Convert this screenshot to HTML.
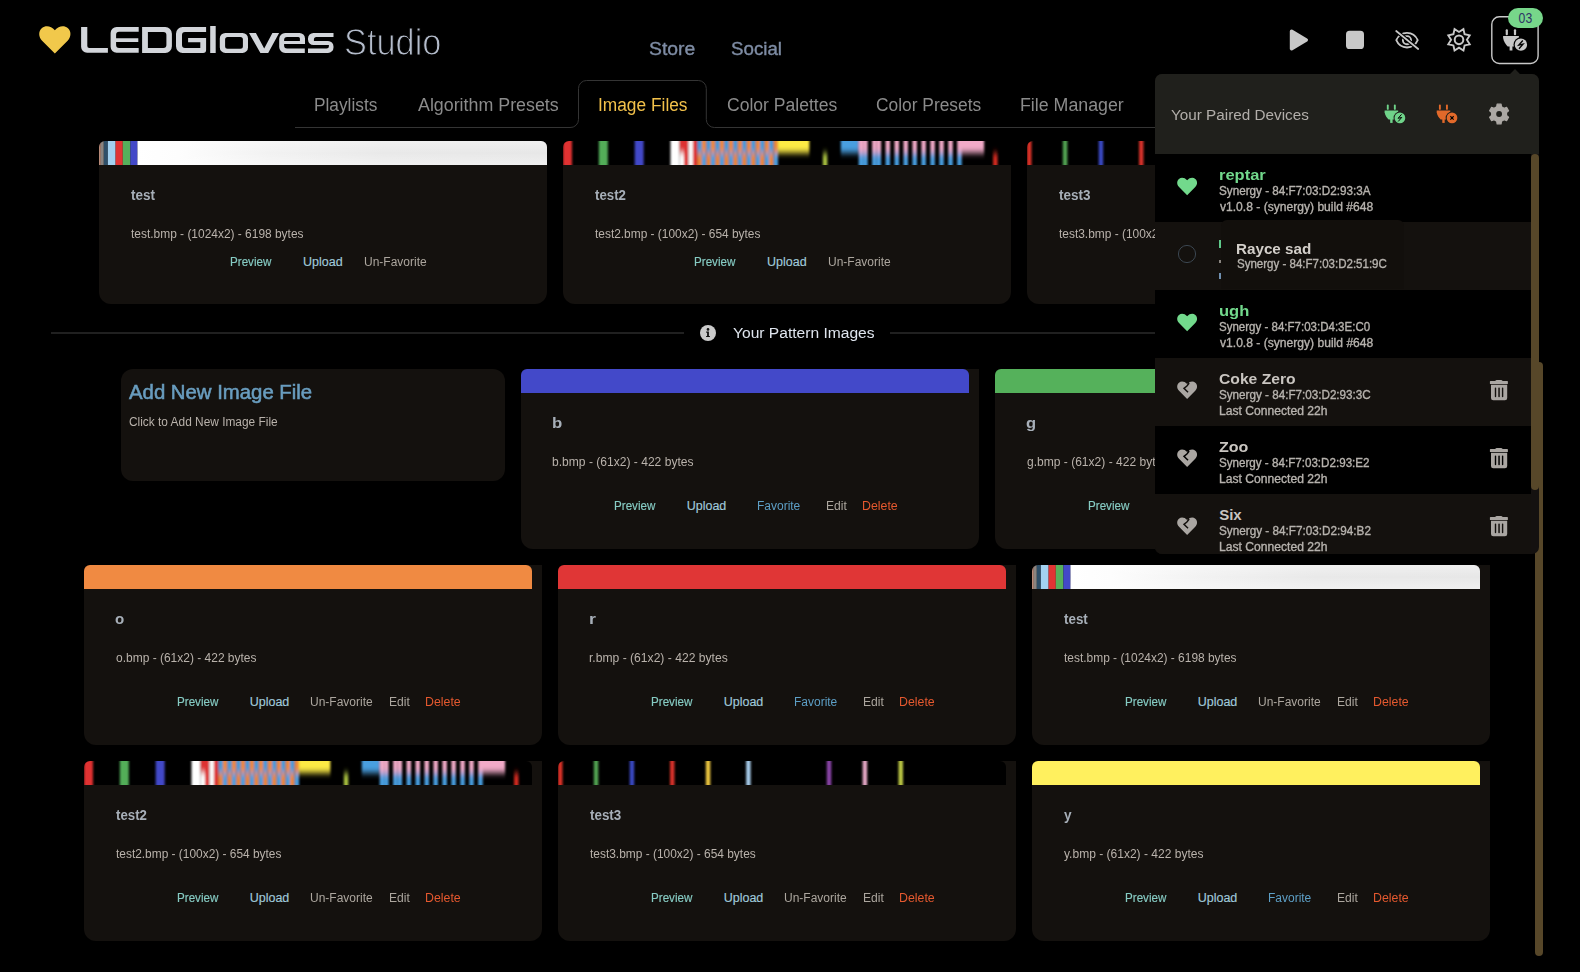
<!DOCTYPE html>
<html><head><meta charset="utf-8"><title>LEDGloves Studio</title>
<style>
html,body{margin:0;padding:0;background:#000;}
body{width:1580px;height:972px;overflow:hidden;position:relative;font-family:"Liberation Sans",sans-serif;}
.abs{position:absolute;display:block;}
.t{position:absolute;white-space:pre;line-height:1;transform-origin:0 0;}
.card{position:absolute;background:#14110e;}
.bar{position:absolute;height:24px;overflow:hidden;border-radius:6px 6px 0 0;}
.panel{position:absolute;left:1155px;top:74px;width:384px;height:480px;border-radius:7px;overflow:hidden;background:#141110;}
.row{position:absolute;left:0;width:376px;height:68px;}
</style></head>
<body>
<svg class="abs" style="left:0;top:0" width="460" height="70" viewBox="0 0 460 70"><path transform="translate(38.9,26.1) scale(0.997,1)" d="M16,27.5 L3.2,14.6 C-0.6,10.8 -0.6,4.9 3.1,1.9 C6.6,-0.9 12.1,-0.4 16,4.1 C19.9,-0.4 25.4,-0.9 28.9,1.9 C32.6,4.9 32.6,10.8 28.8,14.6 Z" fill="#f1c84b"/><path fill-rule="evenodd" fill="#d2d5da" d="M81.1,27.1 H87.3 V45.9 A2,2 0 0 0 89.3,47.9 H107.9 V52.8 H87.1 A6,6 0 0 1 81.1,46.8 Z M116.6,27.1 H138.7 V31.7 H119.1 A3,3 0 0 0 116.1,34.7 V38.2 H138.3 V41.9 H116.1 V44.9 A3,3 0 0 0 119.1,47.9 H138.7 V52.8 H116.6 A6,6 0 0 1 110.6,46.8 V33.1 A6,6 0 0 1 116.6,27.1 Z M142.1,27.1 H165.3 A6.6,6.6 0 0 1 171.9,33.7 V46.3 A6.6,6.6 0 0 1 165.3,52.9 H142.1 Z M147.9,31.9 V48.1 H163.4 A3,3 0 0 0 166.4,45.1 V34.9 A3,3 0 0 0 163.4,31.9 Z M182.6,27.1 H206.1 V31.9 H185 A3,3 0 0 0 182,34.9 V45.1 A3,3 0 0 0 185,48.1 H200.3 V42.3 H188.1 V38 H206.1 V49.9 A3,3 0 0 1 203.1,52.9 H182.6 A6.6,6.6 0 0 1 176,46.3 V33.7 A6.6,6.6 0 0 1 182.6,27.1 Z M210.2,26 H215.7 V52.9 H210.2 Z M225.3,32.9 H242.5 A5.5,5.5 0 0 1 248,38.4 V47.4 A5.5,5.5 0 0 1 242.5,52.9 H225.3 A5.5,5.5 0 0 1 219.8,47.4 V38.4 A5.5,5.5 0 0 1 225.3,32.9 Z M227.6,36.9 A2.5,2.5 0 0 0 225.1,39.4 V46.2 A2.5,2.5 0 0 0 227.6,48.7 H240.4 A2.5,2.5 0 0 0 242.9,46.2 V39.4 A2.5,2.5 0 0 0 240.4,36.9 Z M249,32.9 H255.9 L264.2,48.4 L272.4,32.9 H279.1 L268.2,52.9 H260.4 Z M285.2,32.9 H299.5 A5.5,5.5 0 0 1 305,38.4 V44 H284.1 V45.5 A3,3 0 0 0 287.1,48.5 H304.8 V52.9 H285.2 A6,6 0 0 1 279.2,46.9 V38.9 A6,6 0 0 1 285.2,32.9 Z M287.1,37.1 A3,3 0 0 0 284.1,40.1 V41 H299.9 V38.6 A1.5,1.5 0 0 0 298.4,37.1 Z M313.5,32.9 H333.5 V37.1 H316.4 A2.5,2.5 0 0 0 313.9,39.6 V41 H328 A5.5,5.5 0 0 1 333.5,46.5 V47.4 A5.5,5.5 0 0 1 328,52.9 H308 V48.5 H326.4 A2.5,2.5 0 0 0 328.9,46 V45 H313.5 A5.5,5.5 0 0 1 308,39.5 V38.4 A5.5,5.5 0 0 1 313.5,32.9 Z"/></svg>
<svg class="abs" style="left:1200px;top:0" width="380" height="80" viewBox="1200 0 380 80"><polygon points="1291.6,31.3 1306.2,40 1291.6,48.7" fill="#c8c8c8" stroke="#c8c8c8" stroke-width="3.6" stroke-linejoin="round"/><rect x="1346" y="30.8" width="18" height="18.2" rx="3.6" fill="#c8c8c8"/><path d="M1396.3,40.2 C1400.5,30.5 1413.5,30.5 1417.7,40.2 C1413.5,49.9 1400.5,49.9 1396.3,40.2 Z" fill="none" stroke="#c8c8c8" stroke-width="1.8"/><circle cx="1407" cy="40.2" r="4.1" fill="none" stroke="#c8c8c8" stroke-width="1.9"/><line x1="1396.2" y1="31" x2="1418.2" y2="49" stroke="#000" stroke-width="4"/><line x1="1396.2" y1="31" x2="1418.2" y2="49" stroke="#c8c8c8" stroke-width="1.7" stroke-linecap="round"/><polygon points="1463.44,29.13 1464.59,34.26 1469.72,35.41 1466.90,39.85 1469.72,44.29 1464.59,45.44 1463.44,50.57 1459.00,47.75 1454.56,50.57 1453.41,45.44 1448.28,44.29 1451.10,39.85 1448.28,35.41 1453.41,34.26 1454.56,29.13 1459.00,31.95" fill="none" stroke="#c8c8c8" stroke-width="1.9" stroke-linejoin="miter"/><circle cx="1459" cy="39.85" r="4.3" fill="none" stroke="#c8c8c8" stroke-width="2"/><rect x="1491.8" y="16.7" width="46.3" height="46.8" rx="7.5" fill="none" stroke="#c9c9c9" stroke-width="1.4"/><g transform="translate(1503.1,29.2) scale(1.0)" fill="#c8c8c8"><rect x="2.6" y="0" width="2.2" height="6" rx="1"/><rect x="10.8" y="0" width="2.2" height="6" rx="1"/><path d="M0,6.9 H15.8 V8.9 C15.2,12.4 13.3,15.6 11.2,17.2 H4.6 C2.5,15.6 0.6,12.4 0,8.9 Z"/><rect x="6.5" y="16" width="2.8" height="5.3"/><circle cx="17.8" cy="15.45" r="7.4" fill="#000"/><circle cx="17.8" cy="15.45" r="6.2" fill="#c8c8c8"/><path d="M19.7,11.35 L15.700000000000001,15.95 L19.900000000000002,14.95 L15.9,19.549999999999997" fill="none" stroke="#000" stroke-width="1.35" stroke-linejoin="miter" stroke-miterlimit="6"/></g><rect x="1508" y="8" width="35" height="20" rx="10" fill="#77d68a"/><text x="1525.4" y="23" text-anchor="middle" font-family="Liberation Sans" font-size="14.2" fill="#2e3466" transform="translate(1525.4,0) scale(0.86,1) translate(-1525.4,0)">03</text></svg>
<svg class="abs" style="left:0;top:70px" width="1580" height="70" viewBox="0 70 1580 70">
<path d="M295,127.5 H570 A8,8 0 0 0 578.5,119.5 V88.5 A8,8 0 0 1 586.5,80.5 H698.3 A8,8 0 0 1 706.3,88.5 V119.5 A8,8 0 0 0 714.3,127.5 H1160" fill="none" stroke="#343434" stroke-width="1"/>
</svg>
<!-- separator -->
<div class="abs" style="left:51px;top:332px;width:633px;height:2px;background:#202020"></div>
<div class="abs" style="left:890px;top:332px;width:270px;height:2px;background:#202020"></div>
<svg class="abs" style="left:699px;top:324px" width="18" height="18" viewBox="0 0 18 18">
<circle cx="9" cy="9" r="8" fill="#cacaca"/>
<circle cx="9" cy="5.4" r="1.3" fill="#111"/>
<path d="M7.2,7.6 H9.9 V11.9 H10.9 V13.1 H7.1 V11.9 H8.1 V8.8 H7.2 Z" fill="#111"/>
</svg>
<!-- add new card -->
<div class="card" style="left:121px;top:369px;width:384px;height:112px;border-radius:12px"></div>
<div class="card" style="left:99px;top:141px;width:448px;height:163px;border-radius:12px"></div>
<div class="bar" style="left:99px;top:141px;width:448px"><svg width="448" height="24" viewBox="0 0 448 24" style="display:block"><defs><linearGradient id="tg1" x1="0" x2="1" y1="0" y2="0"><stop offset="0" stop-color="#ffffff"/><stop offset="0.1" stop-color="#fdfdfd"/><stop offset="0.32" stop-color="#f2f2f2"/><stop offset="0.6" stop-color="#e9e9e9"/><stop offset="1" stop-color="#e7e7e7"/></linearGradient><linearGradient id="tg1v" x1="0" x2="0" y1="0" y2="1"><stop offset="0" stop-color="#fff" stop-opacity="0.35"/><stop offset="0.5" stop-color="#fff" stop-opacity="0"/><stop offset="1" stop-color="#fff" stop-opacity="0.35"/></linearGradient></defs><rect x="38.3" y="0" width="410" height="24" fill="url(#tg1)"/><rect x="38.3" y="0" width="410" height="24" fill="url(#tg1v)"/><rect x="0" y="0" width="1.8" height="24" fill="#b88a78"/><rect x="1.8" y="0" width="3.0" height="24" fill="#8a8480"/><rect x="4.8" y="0" width="4.1000000000000005" height="24" fill="#2f4f68"/><rect x="8.9" y="0" width="7.700000000000001" height="24" fill="#a3d1f0"/><rect x="16.6" y="0" width="7.199999999999999" height="24" fill="#e13434"/><rect x="23.8" y="0" width="7.599999999999998" height="24" fill="#56b05b"/><rect x="31.4" y="0" width="6.899999999999999" height="24" fill="#4349c8"/></svg></div>
<div class="card" style="left:563px;top:141px;width:448px;height:163px;border-radius:12px"></div>
<div class="bar" style="left:563px;top:141px;width:448px"><svg width="448" height="24" viewBox="0 0 448 24" style="display:block"><defs><filter id="bf2" x="-5%" y="-100%" width="110%" height="300%"><feGaussianBlur stdDeviation="1.0 3.0"/></filter></defs><rect width="448" height="24" fill="#000"/><g filter="url(#bf2)"><rect x="0.00" y="-12" width="8.96" height="24" fill="#e03232"/><rect x="0.00" y="12" width="8.96" height="24" fill="#e03232"/><rect x="35.84" y="-12" width="8.96" height="24" fill="#52ae58"/><rect x="35.84" y="12" width="8.96" height="24" fill="#52ae58"/><rect x="71.68" y="-12" width="8.96" height="24" fill="#4249c9"/><rect x="71.68" y="12" width="8.96" height="24" fill="#4249c9"/><rect x="107.52" y="-12" width="8.96" height="24" fill="#ffffff"/><rect x="107.52" y="12" width="8.96" height="24" fill="#ffffff"/><rect x="116.48" y="-12" width="4.48" height="24" fill="#e03232"/><rect x="116.48" y="12" width="4.48" height="24" fill="#ffffff"/><rect x="120.96" y="-12" width="4.48" height="24" fill="#e03232"/><rect x="120.96" y="12" width="4.48" height="24" fill="#e03232"/><rect x="125.44" y="-12" width="4.48" height="24" fill="#ffffff"/><rect x="125.44" y="12" width="4.48" height="24" fill="#ffffff"/><rect x="129.92" y="-12" width="4.48" height="24" fill="#e03232"/><rect x="129.92" y="12" width="4.48" height="24" fill="#e03232"/><rect x="134.40" y="-12" width="4.48" height="24" fill="#4a9fe0"/><rect x="134.40" y="12" width="4.48" height="24" fill="#ef8a3a"/><rect x="138.88" y="-12" width="4.48" height="24" fill="#ef8a3a"/><rect x="138.88" y="12" width="4.48" height="24" fill="#4a9fe0"/><rect x="143.36" y="-12" width="4.48" height="24" fill="#4a9fe0"/><rect x="143.36" y="12" width="4.48" height="24" fill="#ef8a3a"/><rect x="147.84" y="-12" width="4.48" height="24" fill="#ef8a3a"/><rect x="147.84" y="12" width="4.48" height="24" fill="#4a9fe0"/><rect x="152.32" y="-12" width="4.48" height="24" fill="#4a9fe0"/><rect x="152.32" y="12" width="4.48" height="24" fill="#ef8a3a"/><rect x="156.80" y="-12" width="4.48" height="24" fill="#ef8a3a"/><rect x="156.80" y="12" width="4.48" height="24" fill="#4a9fe0"/><rect x="161.28" y="-12" width="4.48" height="24" fill="#4a9fe0"/><rect x="161.28" y="12" width="4.48" height="24" fill="#ef8a3a"/><rect x="165.76" y="-12" width="4.48" height="24" fill="#ef8a3a"/><rect x="165.76" y="12" width="4.48" height="24" fill="#4a9fe0"/><rect x="170.24" y="-12" width="4.48" height="24" fill="#4a9fe0"/><rect x="170.24" y="12" width="4.48" height="24" fill="#ef8a3a"/><rect x="174.72" y="-12" width="4.48" height="24" fill="#ef8a3a"/><rect x="174.72" y="12" width="4.48" height="24" fill="#4a9fe0"/><rect x="179.20" y="-12" width="4.48" height="24" fill="#4a9fe0"/><rect x="179.20" y="12" width="4.48" height="24" fill="#ef8a3a"/><rect x="183.68" y="-12" width="4.48" height="24" fill="#ef8a3a"/><rect x="183.68" y="12" width="4.48" height="24" fill="#4a9fe0"/><rect x="188.16" y="-12" width="4.48" height="24" fill="#4a9fe0"/><rect x="188.16" y="12" width="4.48" height="24" fill="#ef8a3a"/><rect x="192.64" y="-12" width="4.48" height="24" fill="#ef8a3a"/><rect x="192.64" y="12" width="4.48" height="24" fill="#4a9fe0"/><rect x="197.12" y="-12" width="4.48" height="24" fill="#4a9fe0"/><rect x="197.12" y="12" width="4.48" height="24" fill="#ef8a3a"/><rect x="201.60" y="-12" width="4.48" height="24" fill="#ef8a3a"/><rect x="201.60" y="12" width="4.48" height="24" fill="#4a9fe0"/><rect x="206.08" y="-12" width="4.48" height="24" fill="#4a9fe0"/><rect x="206.08" y="12" width="4.48" height="24" fill="#ef8a3a"/><rect x="210.56" y="-12" width="4.48" height="24" fill="#ef8a3a"/><rect x="210.56" y="12" width="4.48" height="24" fill="#4a9fe0"/><rect x="215.04" y="-12" width="31.36" height="24" fill="#fdeb45"/><rect x="259.84" y="12" width="4.48" height="24" fill="#a8c040"/><rect x="277.76" y="-12" width="17.92" height="24" fill="#4a9fe0"/><rect x="295.68" y="-12" width="4.48" height="24" fill="#f2aac8"/><rect x="295.68" y="12" width="4.48" height="24" fill="#4a9fe0"/><rect x="300.16" y="-12" width="4.48" height="24" fill="#f2aac8"/><rect x="300.16" y="12" width="4.48" height="24" fill="#4a9fe0"/><rect x="309.12" y="-12" width="4.48" height="24" fill="#f2aac8"/><rect x="309.12" y="12" width="4.48" height="24" fill="#4a9fe0"/><rect x="313.60" y="-12" width="4.48" height="24" fill="#f2aac8"/><rect x="313.60" y="12" width="4.48" height="24" fill="#4a9fe0"/><rect x="322.56" y="-12" width="4.48" height="24" fill="#f2aac8"/><rect x="322.56" y="12" width="4.48" height="24" fill="#4a9fe0"/><rect x="331.52" y="-12" width="4.48" height="24" fill="#f2aac8"/><rect x="331.52" y="12" width="4.48" height="24" fill="#4a9fe0"/><rect x="340.48" y="-12" width="4.48" height="24" fill="#f2aac8"/><rect x="340.48" y="12" width="4.48" height="24" fill="#4a9fe0"/><rect x="349.44" y="-12" width="4.48" height="24" fill="#f2aac8"/><rect x="349.44" y="12" width="4.48" height="24" fill="#4a9fe0"/><rect x="358.40" y="-12" width="4.48" height="24" fill="#f2aac8"/><rect x="358.40" y="12" width="4.48" height="24" fill="#4a9fe0"/><rect x="367.36" y="-12" width="4.48" height="24" fill="#f2aac8"/><rect x="367.36" y="12" width="4.48" height="24" fill="#4a9fe0"/><rect x="376.32" y="-12" width="4.48" height="24" fill="#f2aac8"/><rect x="376.32" y="12" width="4.48" height="24" fill="#4a9fe0"/><rect x="385.28" y="-12" width="4.48" height="24" fill="#f2aac8"/><rect x="385.28" y="12" width="4.48" height="24" fill="#4a9fe0"/><rect x="394.24" y="-12" width="26.88" height="24" fill="#f2aac8"/><rect x="394.24" y="12" width="4.48" height="24" fill="#4a9fe0"/><rect x="430.08" y="12" width="4.48" height="24" fill="#d42a20"/></g></svg></div>
<div class="card" style="left:1027px;top:141px;width:448px;height:163px;border-radius:12px"></div>
<div class="bar" style="left:1027px;top:141px;width:448px"><svg width="448" height="24" viewBox="0 0 448 24" style="display:block"><defs><filter id="bf3" x="-5%" y="-100%" width="110%" height="300%"><feGaussianBlur stdDeviation="0.9 3.0"/></filter></defs><rect width="448" height="24" fill="#000"/><g filter="url(#bf3)"><rect x="0.00" y="-12" width="4.48" height="24" fill="#dc3228"/><rect x="0.00" y="12" width="4.48" height="24" fill="#dc3228"/><rect x="35.84" y="-12" width="4.48" height="24" fill="#52a452"/><rect x="35.84" y="12" width="4.48" height="24" fill="#52a452"/><rect x="71.68" y="-12" width="4.48" height="24" fill="#3a48c4"/><rect x="71.68" y="12" width="4.48" height="24" fill="#3a48c4"/><rect x="112.00" y="-12" width="4.48" height="24" fill="#d8302a"/><rect x="112.00" y="12" width="4.48" height="24" fill="#d8302a"/><rect x="147.84" y="-12" width="4.48" height="24" fill="#ecc640"/><rect x="147.84" y="12" width="4.48" height="24" fill="#ecc640"/><rect x="188.16" y="-12" width="4.48" height="24" fill="#a8cdec"/><rect x="188.16" y="12" width="4.48" height="24" fill="#a8cdec"/><rect x="268.80" y="-12" width="4.48" height="24" fill="#8a44a8"/><rect x="268.80" y="12" width="4.48" height="24" fill="#8a44a8"/><rect x="304.64" y="-12" width="4.48" height="24" fill="#e6a8c6"/><rect x="304.64" y="12" width="4.48" height="24" fill="#e6a8c6"/><rect x="340.48" y="-12" width="4.48" height="24" fill="#bcc844"/><rect x="340.48" y="12" width="4.48" height="24" fill="#bcc844"/></g></svg></div>
<div class="card" style="left:521px;top:369px;width:458px;height:180px;border-radius:12px 0 12px 12px"></div>
<div class="bar" style="left:521px;top:369px;width:448px"><div style="width:100%;height:100%;background:#4349c9"></div></div>
<div class="card" style="left:995px;top:369px;width:458px;height:180px;border-radius:12px 0 12px 12px"></div>
<div class="bar" style="left:995px;top:369px;width:448px"><div style="width:100%;height:100%;background:#55b15b"></div></div>
<div class="card" style="left:84px;top:565px;width:458px;height:180px;border-radius:12px 0 12px 12px"></div>
<div class="bar" style="left:84px;top:565px;width:448px"><div style="width:100%;height:100%;background:#f08a42"></div></div>
<div class="card" style="left:558px;top:565px;width:458px;height:180px;border-radius:12px 0 12px 12px"></div>
<div class="bar" style="left:558px;top:565px;width:448px"><div style="width:100%;height:100%;background:#e03636"></div></div>
<div class="card" style="left:1032px;top:565px;width:458px;height:180px;border-radius:12px 0 12px 12px"></div>
<div class="bar" style="left:1032px;top:565px;width:448px"><svg width="448" height="24" viewBox="0 0 448 24" style="display:block"><defs><linearGradient id="tg4" x1="0" x2="1" y1="0" y2="0"><stop offset="0" stop-color="#ffffff"/><stop offset="0.1" stop-color="#fdfdfd"/><stop offset="0.32" stop-color="#f2f2f2"/><stop offset="0.6" stop-color="#e9e9e9"/><stop offset="1" stop-color="#e7e7e7"/></linearGradient><linearGradient id="tg4v" x1="0" x2="0" y1="0" y2="1"><stop offset="0" stop-color="#fff" stop-opacity="0.35"/><stop offset="0.5" stop-color="#fff" stop-opacity="0"/><stop offset="1" stop-color="#fff" stop-opacity="0.35"/></linearGradient></defs><rect x="38.3" y="0" width="410" height="24" fill="url(#tg4)"/><rect x="38.3" y="0" width="410" height="24" fill="url(#tg4v)"/><rect x="0" y="0" width="1.8" height="24" fill="#b88a78"/><rect x="1.8" y="0" width="3.0" height="24" fill="#8a8480"/><rect x="4.8" y="0" width="4.1000000000000005" height="24" fill="#2f4f68"/><rect x="8.9" y="0" width="7.700000000000001" height="24" fill="#a3d1f0"/><rect x="16.6" y="0" width="7.199999999999999" height="24" fill="#e13434"/><rect x="23.8" y="0" width="7.599999999999998" height="24" fill="#56b05b"/><rect x="31.4" y="0" width="6.899999999999999" height="24" fill="#4349c8"/></svg></div>
<div class="card" style="left:84px;top:761px;width:458px;height:180px;border-radius:12px 0 12px 12px"></div>
<div class="bar" style="left:84px;top:761px;width:448px"><svg width="448" height="24" viewBox="0 0 448 24" style="display:block"><defs><filter id="bf5" x="-5%" y="-100%" width="110%" height="300%"><feGaussianBlur stdDeviation="1.0 3.0"/></filter></defs><rect width="448" height="24" fill="#000"/><g filter="url(#bf5)"><rect x="0.00" y="-12" width="8.96" height="24" fill="#e03232"/><rect x="0.00" y="12" width="8.96" height="24" fill="#e03232"/><rect x="35.84" y="-12" width="8.96" height="24" fill="#52ae58"/><rect x="35.84" y="12" width="8.96" height="24" fill="#52ae58"/><rect x="71.68" y="-12" width="8.96" height="24" fill="#4249c9"/><rect x="71.68" y="12" width="8.96" height="24" fill="#4249c9"/><rect x="107.52" y="-12" width="8.96" height="24" fill="#ffffff"/><rect x="107.52" y="12" width="8.96" height="24" fill="#ffffff"/><rect x="116.48" y="-12" width="4.48" height="24" fill="#e03232"/><rect x="116.48" y="12" width="4.48" height="24" fill="#ffffff"/><rect x="120.96" y="-12" width="4.48" height="24" fill="#e03232"/><rect x="120.96" y="12" width="4.48" height="24" fill="#e03232"/><rect x="125.44" y="-12" width="4.48" height="24" fill="#ffffff"/><rect x="125.44" y="12" width="4.48" height="24" fill="#ffffff"/><rect x="129.92" y="-12" width="4.48" height="24" fill="#e03232"/><rect x="129.92" y="12" width="4.48" height="24" fill="#e03232"/><rect x="134.40" y="-12" width="4.48" height="24" fill="#4a9fe0"/><rect x="134.40" y="12" width="4.48" height="24" fill="#ef8a3a"/><rect x="138.88" y="-12" width="4.48" height="24" fill="#ef8a3a"/><rect x="138.88" y="12" width="4.48" height="24" fill="#4a9fe0"/><rect x="143.36" y="-12" width="4.48" height="24" fill="#4a9fe0"/><rect x="143.36" y="12" width="4.48" height="24" fill="#ef8a3a"/><rect x="147.84" y="-12" width="4.48" height="24" fill="#ef8a3a"/><rect x="147.84" y="12" width="4.48" height="24" fill="#4a9fe0"/><rect x="152.32" y="-12" width="4.48" height="24" fill="#4a9fe0"/><rect x="152.32" y="12" width="4.48" height="24" fill="#ef8a3a"/><rect x="156.80" y="-12" width="4.48" height="24" fill="#ef8a3a"/><rect x="156.80" y="12" width="4.48" height="24" fill="#4a9fe0"/><rect x="161.28" y="-12" width="4.48" height="24" fill="#4a9fe0"/><rect x="161.28" y="12" width="4.48" height="24" fill="#ef8a3a"/><rect x="165.76" y="-12" width="4.48" height="24" fill="#ef8a3a"/><rect x="165.76" y="12" width="4.48" height="24" fill="#4a9fe0"/><rect x="170.24" y="-12" width="4.48" height="24" fill="#4a9fe0"/><rect x="170.24" y="12" width="4.48" height="24" fill="#ef8a3a"/><rect x="174.72" y="-12" width="4.48" height="24" fill="#ef8a3a"/><rect x="174.72" y="12" width="4.48" height="24" fill="#4a9fe0"/><rect x="179.20" y="-12" width="4.48" height="24" fill="#4a9fe0"/><rect x="179.20" y="12" width="4.48" height="24" fill="#ef8a3a"/><rect x="183.68" y="-12" width="4.48" height="24" fill="#ef8a3a"/><rect x="183.68" y="12" width="4.48" height="24" fill="#4a9fe0"/><rect x="188.16" y="-12" width="4.48" height="24" fill="#4a9fe0"/><rect x="188.16" y="12" width="4.48" height="24" fill="#ef8a3a"/><rect x="192.64" y="-12" width="4.48" height="24" fill="#ef8a3a"/><rect x="192.64" y="12" width="4.48" height="24" fill="#4a9fe0"/><rect x="197.12" y="-12" width="4.48" height="24" fill="#4a9fe0"/><rect x="197.12" y="12" width="4.48" height="24" fill="#ef8a3a"/><rect x="201.60" y="-12" width="4.48" height="24" fill="#ef8a3a"/><rect x="201.60" y="12" width="4.48" height="24" fill="#4a9fe0"/><rect x="206.08" y="-12" width="4.48" height="24" fill="#4a9fe0"/><rect x="206.08" y="12" width="4.48" height="24" fill="#ef8a3a"/><rect x="210.56" y="-12" width="4.48" height="24" fill="#ef8a3a"/><rect x="210.56" y="12" width="4.48" height="24" fill="#4a9fe0"/><rect x="215.04" y="-12" width="31.36" height="24" fill="#fdeb45"/><rect x="259.84" y="12" width="4.48" height="24" fill="#a8c040"/><rect x="277.76" y="-12" width="17.92" height="24" fill="#4a9fe0"/><rect x="295.68" y="-12" width="4.48" height="24" fill="#f2aac8"/><rect x="295.68" y="12" width="4.48" height="24" fill="#4a9fe0"/><rect x="300.16" y="-12" width="4.48" height="24" fill="#f2aac8"/><rect x="300.16" y="12" width="4.48" height="24" fill="#4a9fe0"/><rect x="309.12" y="-12" width="4.48" height="24" fill="#f2aac8"/><rect x="309.12" y="12" width="4.48" height="24" fill="#4a9fe0"/><rect x="313.60" y="-12" width="4.48" height="24" fill="#f2aac8"/><rect x="313.60" y="12" width="4.48" height="24" fill="#4a9fe0"/><rect x="322.56" y="-12" width="4.48" height="24" fill="#f2aac8"/><rect x="322.56" y="12" width="4.48" height="24" fill="#4a9fe0"/><rect x="331.52" y="-12" width="4.48" height="24" fill="#f2aac8"/><rect x="331.52" y="12" width="4.48" height="24" fill="#4a9fe0"/><rect x="340.48" y="-12" width="4.48" height="24" fill="#f2aac8"/><rect x="340.48" y="12" width="4.48" height="24" fill="#4a9fe0"/><rect x="349.44" y="-12" width="4.48" height="24" fill="#f2aac8"/><rect x="349.44" y="12" width="4.48" height="24" fill="#4a9fe0"/><rect x="358.40" y="-12" width="4.48" height="24" fill="#f2aac8"/><rect x="358.40" y="12" width="4.48" height="24" fill="#4a9fe0"/><rect x="367.36" y="-12" width="4.48" height="24" fill="#f2aac8"/><rect x="367.36" y="12" width="4.48" height="24" fill="#4a9fe0"/><rect x="376.32" y="-12" width="4.48" height="24" fill="#f2aac8"/><rect x="376.32" y="12" width="4.48" height="24" fill="#4a9fe0"/><rect x="385.28" y="-12" width="4.48" height="24" fill="#f2aac8"/><rect x="385.28" y="12" width="4.48" height="24" fill="#4a9fe0"/><rect x="394.24" y="-12" width="26.88" height="24" fill="#f2aac8"/><rect x="394.24" y="12" width="4.48" height="24" fill="#4a9fe0"/><rect x="430.08" y="12" width="4.48" height="24" fill="#d42a20"/></g></svg></div>
<div class="card" style="left:558px;top:761px;width:458px;height:180px;border-radius:12px 0 12px 12px"></div>
<div class="bar" style="left:558px;top:761px;width:448px"><svg width="448" height="24" viewBox="0 0 448 24" style="display:block"><defs><filter id="bf6" x="-5%" y="-100%" width="110%" height="300%"><feGaussianBlur stdDeviation="0.9 3.0"/></filter></defs><rect width="448" height="24" fill="#000"/><g filter="url(#bf6)"><rect x="0.00" y="-12" width="4.48" height="24" fill="#dc3228"/><rect x="0.00" y="12" width="4.48" height="24" fill="#dc3228"/><rect x="35.84" y="-12" width="4.48" height="24" fill="#52a452"/><rect x="35.84" y="12" width="4.48" height="24" fill="#52a452"/><rect x="71.68" y="-12" width="4.48" height="24" fill="#3a48c4"/><rect x="71.68" y="12" width="4.48" height="24" fill="#3a48c4"/><rect x="112.00" y="-12" width="4.48" height="24" fill="#d8302a"/><rect x="112.00" y="12" width="4.48" height="24" fill="#d8302a"/><rect x="147.84" y="-12" width="4.48" height="24" fill="#ecc640"/><rect x="147.84" y="12" width="4.48" height="24" fill="#ecc640"/><rect x="188.16" y="-12" width="4.48" height="24" fill="#a8cdec"/><rect x="188.16" y="12" width="4.48" height="24" fill="#a8cdec"/><rect x="268.80" y="-12" width="4.48" height="24" fill="#8a44a8"/><rect x="268.80" y="12" width="4.48" height="24" fill="#8a44a8"/><rect x="304.64" y="-12" width="4.48" height="24" fill="#e6a8c6"/><rect x="304.64" y="12" width="4.48" height="24" fill="#e6a8c6"/><rect x="340.48" y="-12" width="4.48" height="24" fill="#bcc844"/><rect x="340.48" y="12" width="4.48" height="24" fill="#bcc844"/></g></svg></div>
<div class="card" style="left:1032px;top:761px;width:458px;height:180px;border-radius:12px 0 12px 12px"></div>
<div class="bar" style="left:1032px;top:761px;width:448px"><div style="width:100%;height:100%;background:#fff05e"></div></div>
<div class="t" style="left:344.13px;top:24px;font-size:37px;font-weight:normal;color:#b4bccb;transform:scaleX(0.9281);-webkit-text-stroke:1.1px #000;">Studio</div>
<div class="t" style="left:649.33px;top:41px;font-size:17.5px;font-weight:normal;color:#7e8ca4;transform:scaleX(1.1041);-webkit-text-stroke:0.35px #7e8ca4;">Store</div>
<div class="t" style="left:731.45px;top:41px;font-size:17.5px;font-weight:normal;color:#7e8ca4;transform:scaleX(1.0703);-webkit-text-stroke:0.35px #7e8ca4;">Social</div>
<div class="t" style="left:314.26px;top:96px;font-size:18px;font-weight:normal;color:#8b8b8b;transform:scaleX(0.9592);">Playlists</div>
<div class="t" style="left:417.60px;top:96px;font-size:18px;font-weight:normal;color:#8b8b8b;transform:scaleX(0.9905);">Algorithm Presets</div>
<div class="t" style="left:597.86px;top:96px;font-size:18px;font-weight:normal;color:#f2c14a;transform:scaleX(0.9622);">Image Files</div>
<div class="t" style="left:727.12px;top:96px;font-size:18px;font-weight:normal;color:#8b8b8b;transform:scaleX(0.9753);">Color Palettes</div>
<div class="t" style="left:876.23px;top:96px;font-size:18px;font-weight:normal;color:#8b8b8b;transform:scaleX(0.9643);">Color Presets</div>
<div class="t" style="left:1020.42px;top:96px;font-size:18px;font-weight:normal;color:#8b8b8b;transform:scaleX(0.9879);">File Manager</div>
<div class="t" style="left:732.60px;top:325px;font-size:15.5px;font-weight:normal;color:#dfe5ee;transform:scaleX(1.0058);">Your Pattern Images</div>
<div class="t" style="left:130.90px;top:188px;font-size:14px;font-weight:bold;color:#a7afb8;transform:scaleX(0.9621);">test</div>
<div class="t" style="left:130.90px;top:228px;font-size:12.5px;font-weight:normal;color:#b9b2ab;transform:scaleX(0.9550);">test.bmp - (1024x2) - 6198 bytes</div>
<div class="t" style="left:229.57px;top:256px;font-size:12.5px;font-weight:normal;color:#86cbc3;transform:scaleX(0.9304);-webkit-text-stroke:0.15px #86cbc3;">Preview</div>
<div class="t" style="left:303.10px;top:256px;font-size:12.5px;font-weight:normal;color:#a0cadb;-webkit-text-stroke:0.15px #a0cadb;">Upload</div>
<div class="t" style="left:363.64px;top:256px;font-size:12.5px;font-weight:normal;color:#aca69e;transform:scaleX(0.9602);">Un-Favorite</div>
<div class="t" style="left:594.91px;top:188px;font-size:14px;font-weight:bold;color:#a7afb8;transform:scaleX(0.9471);">test2</div>
<div class="t" style="left:594.90px;top:228px;font-size:12.5px;font-weight:normal;color:#b9b2ab;transform:scaleX(0.9524);">test2.bmp - (100x2) - 654 bytes</div>
<div class="t" style="left:693.57px;top:256px;font-size:12.5px;font-weight:normal;color:#86cbc3;transform:scaleX(0.9304);-webkit-text-stroke:0.15px #86cbc3;">Preview</div>
<div class="t" style="left:767.10px;top:256px;font-size:12.5px;font-weight:normal;color:#a0cadb;-webkit-text-stroke:0.15px #a0cadb;">Upload</div>
<div class="t" style="left:827.64px;top:256px;font-size:12.5px;font-weight:normal;color:#aca69e;transform:scaleX(0.9602);">Un-Favorite</div>
<div class="t" style="left:1058.90px;top:188px;font-size:14px;font-weight:bold;color:#a7afb8;transform:scaleX(0.9627);">test3</div>
<div class="t" style="left:1058.90px;top:228px;font-size:12.5px;font-weight:normal;color:#b9b2ab;transform:scaleX(0.9541);">test3.bmp - (100x2) - 654 bytes</div>
<div class="t" style="left:1157.57px;top:256px;font-size:12.5px;font-weight:normal;color:#86cbc3;transform:scaleX(0.9304);-webkit-text-stroke:0.15px #86cbc3;">Preview</div>
<div class="t" style="left:1231.10px;top:256px;font-size:12.5px;font-weight:normal;color:#a0cadb;-webkit-text-stroke:0.15px #a0cadb;">Upload</div>
<div class="t" style="left:1291.64px;top:256px;font-size:12.5px;font-weight:normal;color:#aca69e;transform:scaleX(0.9602);">Un-Favorite</div>
<div class="t" style="left:551.92px;top:416px;font-size:14px;font-weight:bold;color:#a7afb8;transform:scaleX(1.1972);">b</div>
<div class="t" style="left:552.23px;top:456px;font-size:12.5px;font-weight:normal;color:#b9b2ab;transform:scaleX(0.9653);">b.bmp - (61x2) - 422 bytes</div>
<div class="t" style="left:613.57px;top:500px;font-size:12.5px;font-weight:normal;color:#86cbc3;transform:scaleX(0.9304);-webkit-text-stroke:0.15px #86cbc3;">Preview</div>
<div class="t" style="left:686.70px;top:500px;font-size:12.5px;font-weight:normal;color:#a0cadb;-webkit-text-stroke:0.15px #a0cadb;">Upload</div>
<div class="t" style="left:756.84px;top:500px;font-size:12.5px;font-weight:normal;color:#5d9fc6;transform:scaleX(0.9587);">Favorite</div>
<div class="t" style="left:825.93px;top:500px;font-size:12.5px;font-weight:normal;color:#aca69e;transform:scaleX(0.9674);">Edit</div>
<div class="t" style="left:862.21px;top:500px;font-size:12.5px;font-weight:normal;color:#e5592f;transform:scaleX(0.9890);">Delete</div>
<div class="t" style="left:1026.41px;top:416px;font-size:14px;font-weight:bold;color:#a7afb8;transform:scaleX(1.1806);">g</div>
<div class="t" style="left:1026.52px;top:456px;font-size:12.5px;font-weight:normal;color:#b9b2ab;transform:scaleX(0.9633);">g.bmp - (61x2) - 422 bytes</div>
<div class="t" style="left:1087.57px;top:500px;font-size:12.5px;font-weight:normal;color:#86cbc3;transform:scaleX(0.9304);-webkit-text-stroke:0.15px #86cbc3;">Preview</div>
<div class="t" style="left:1160.70px;top:500px;font-size:12.5px;font-weight:normal;color:#a0cadb;-webkit-text-stroke:0.15px #a0cadb;">Upload</div>
<div class="t" style="left:1221.44px;top:500px;font-size:12.5px;font-weight:normal;color:#aca69e;transform:scaleX(0.9602);">Un-Favorite</div>
<div class="t" style="left:1299.93px;top:500px;font-size:12.5px;font-weight:normal;color:#aca69e;transform:scaleX(0.9674);">Edit</div>
<div class="t" style="left:1336.21px;top:500px;font-size:12.5px;font-weight:normal;color:#e5592f;transform:scaleX(0.9890);">Delete</div>
<div class="t" style="left:115.46px;top:612px;font-size:14px;font-weight:bold;color:#a7afb8;transform:scaleX(1.0789);">o</div>
<div class="t" style="left:115.52px;top:652px;font-size:12.5px;font-weight:normal;color:#b9b2ab;transform:scaleX(0.9585);">o.bmp - (61x2) - 422 bytes</div>
<div class="t" style="left:176.57px;top:696px;font-size:12.5px;font-weight:normal;color:#86cbc3;transform:scaleX(0.9304);-webkit-text-stroke:0.15px #86cbc3;">Preview</div>
<div class="t" style="left:249.70px;top:696px;font-size:12.5px;font-weight:normal;color:#a0cadb;-webkit-text-stroke:0.15px #a0cadb;">Upload</div>
<div class="t" style="left:310.44px;top:696px;font-size:12.5px;font-weight:normal;color:#aca69e;transform:scaleX(0.9602);">Un-Favorite</div>
<div class="t" style="left:388.93px;top:696px;font-size:12.5px;font-weight:normal;color:#aca69e;transform:scaleX(0.9674);">Edit</div>
<div class="t" style="left:425.21px;top:696px;font-size:12.5px;font-weight:normal;color:#e5592f;transform:scaleX(0.9890);">Delete</div>
<div class="t" style="left:588.85px;top:612px;font-size:14px;font-weight:bold;color:#a7afb8;transform:scaleX(1.2727);">r</div>
<div class="t" style="left:589.22px;top:652px;font-size:12.5px;font-weight:normal;color:#b9b2ab;transform:scaleX(0.9692);">r.bmp - (61x2) - 422 bytes</div>
<div class="t" style="left:650.57px;top:696px;font-size:12.5px;font-weight:normal;color:#86cbc3;transform:scaleX(0.9304);-webkit-text-stroke:0.15px #86cbc3;">Preview</div>
<div class="t" style="left:723.70px;top:696px;font-size:12.5px;font-weight:normal;color:#a0cadb;-webkit-text-stroke:0.15px #a0cadb;">Upload</div>
<div class="t" style="left:793.84px;top:696px;font-size:12.5px;font-weight:normal;color:#5d9fc6;transform:scaleX(0.9587);">Favorite</div>
<div class="t" style="left:862.93px;top:696px;font-size:12.5px;font-weight:normal;color:#aca69e;transform:scaleX(0.9674);">Edit</div>
<div class="t" style="left:899.21px;top:696px;font-size:12.5px;font-weight:normal;color:#e5592f;transform:scaleX(0.9890);">Delete</div>
<div class="t" style="left:1063.90px;top:612px;font-size:14px;font-weight:bold;color:#a7afb8;transform:scaleX(0.9540);">test</div>
<div class="t" style="left:1063.90px;top:652px;font-size:12.5px;font-weight:normal;color:#b9b2ab;transform:scaleX(0.9550);">test.bmp - (1024x2) - 6198 bytes</div>
<div class="t" style="left:1124.57px;top:696px;font-size:12.5px;font-weight:normal;color:#86cbc3;transform:scaleX(0.9304);-webkit-text-stroke:0.15px #86cbc3;">Preview</div>
<div class="t" style="left:1197.70px;top:696px;font-size:12.5px;font-weight:normal;color:#a0cadb;-webkit-text-stroke:0.15px #a0cadb;">Upload</div>
<div class="t" style="left:1258.44px;top:696px;font-size:12.5px;font-weight:normal;color:#aca69e;transform:scaleX(0.9602);">Un-Favorite</div>
<div class="t" style="left:1336.93px;top:696px;font-size:12.5px;font-weight:normal;color:#aca69e;transform:scaleX(0.9674);">Edit</div>
<div class="t" style="left:1373.21px;top:696px;font-size:12.5px;font-weight:normal;color:#e5592f;transform:scaleX(0.9890);">Delete</div>
<div class="t" style="left:115.91px;top:808px;font-size:14px;font-weight:bold;color:#a7afb8;transform:scaleX(0.9471);">test2</div>
<div class="t" style="left:115.90px;top:848px;font-size:12.5px;font-weight:normal;color:#b9b2ab;transform:scaleX(0.9524);">test2.bmp - (100x2) - 654 bytes</div>
<div class="t" style="left:176.57px;top:892px;font-size:12.5px;font-weight:normal;color:#86cbc3;transform:scaleX(0.9304);-webkit-text-stroke:0.15px #86cbc3;">Preview</div>
<div class="t" style="left:249.70px;top:892px;font-size:12.5px;font-weight:normal;color:#a0cadb;-webkit-text-stroke:0.15px #a0cadb;">Upload</div>
<div class="t" style="left:310.44px;top:892px;font-size:12.5px;font-weight:normal;color:#aca69e;transform:scaleX(0.9602);">Un-Favorite</div>
<div class="t" style="left:388.93px;top:892px;font-size:12.5px;font-weight:normal;color:#aca69e;transform:scaleX(0.9674);">Edit</div>
<div class="t" style="left:425.21px;top:892px;font-size:12.5px;font-weight:normal;color:#e5592f;transform:scaleX(0.9890);">Delete</div>
<div class="t" style="left:589.90px;top:808px;font-size:14px;font-weight:bold;color:#a7afb8;transform:scaleX(0.9565);">test3</div>
<div class="t" style="left:589.90px;top:848px;font-size:12.5px;font-weight:normal;color:#b9b2ab;transform:scaleX(0.9541);">test3.bmp - (100x2) - 654 bytes</div>
<div class="t" style="left:650.57px;top:892px;font-size:12.5px;font-weight:normal;color:#86cbc3;transform:scaleX(0.9304);-webkit-text-stroke:0.15px #86cbc3;">Preview</div>
<div class="t" style="left:723.70px;top:892px;font-size:12.5px;font-weight:normal;color:#a0cadb;-webkit-text-stroke:0.15px #a0cadb;">Upload</div>
<div class="t" style="left:784.44px;top:892px;font-size:12.5px;font-weight:normal;color:#aca69e;transform:scaleX(0.9602);">Un-Favorite</div>
<div class="t" style="left:862.93px;top:892px;font-size:12.5px;font-weight:normal;color:#aca69e;transform:scaleX(0.9674);">Edit</div>
<div class="t" style="left:899.21px;top:892px;font-size:12.5px;font-weight:normal;color:#e5592f;transform:scaleX(0.9890);">Delete</div>
<div class="t" style="left:1063.90px;top:808px;font-size:14px;font-weight:bold;color:#a7afb8;transform:scaleX(0.9740);">y</div>
<div class="t" style="left:1064.00px;top:848px;font-size:12.5px;font-weight:normal;color:#b9b2ab;transform:scaleX(0.9618);">y.bmp - (61x2) - 422 bytes</div>
<div class="t" style="left:1124.57px;top:892px;font-size:12.5px;font-weight:normal;color:#86cbc3;transform:scaleX(0.9304);-webkit-text-stroke:0.15px #86cbc3;">Preview</div>
<div class="t" style="left:1197.70px;top:892px;font-size:12.5px;font-weight:normal;color:#a0cadb;-webkit-text-stroke:0.15px #a0cadb;">Upload</div>
<div class="t" style="left:1267.84px;top:892px;font-size:12.5px;font-weight:normal;color:#5d9fc6;transform:scaleX(0.9587);">Favorite</div>
<div class="t" style="left:1336.93px;top:892px;font-size:12.5px;font-weight:normal;color:#aca69e;transform:scaleX(0.9674);">Edit</div>
<div class="t" style="left:1373.21px;top:892px;font-size:12.5px;font-weight:normal;color:#e5592f;transform:scaleX(0.9890);">Delete</div>
<div class="t" style="left:129.30px;top:382px;font-size:20px;font-weight:normal;color:#699dbf;transform:scaleX(1.0170);-webkit-text-stroke:0.55px #699dbf;">Add New Image File</div>
<div class="t" style="left:128.63px;top:416px;font-size:12.5px;font-weight:normal;color:#b9b2ab;transform:scaleX(0.9509);">Click to Add New Image File</div>
<!-- page scrollbar -->
<div class="abs" style="left:1535px;top:362px;width:8px;height:594px;border-radius:4px;background:#574729"></div>
<!-- panel pointer -->
<svg class="abs" style="left:1505px;top:66px" width="20" height="10" viewBox="0 0 20 10"><path d="M4.6,8.5 L10,3 L15.4,8.5 Z" fill="#20201c"/></svg>
<div class="panel">
  <div class="abs" style="left:0;top:0;width:384px;height:80px;background:#20201c"></div>
  <svg class="abs" style="left:0;top:0" width="384" height="80" viewBox="0 0 384 80"><g transform="translate(229.5999999999999,30.599999999999994) scale(0.86)" fill="#6fd389"><rect x="2.6" y="0" width="2.2" height="6" rx="1"/><rect x="10.8" y="0" width="2.2" height="6" rx="1"/><path d="M0,6.9 H15.8 V8.9 C15.2,12.4 13.3,15.6 11.2,17.2 H4.6 C2.5,15.6 0.6,12.4 0,8.9 Z"/><rect x="6.5" y="16" width="2.8" height="5.3"/><circle cx="17.8" cy="15.45" r="7.4" fill="#20201c"/><circle cx="17.8" cy="15.45" r="6.2" fill="#6fd389"/><path d="M19.7,11.35 L15.700000000000001,15.95 L19.900000000000002,14.95 L15.9,19.549999999999997" fill="none" stroke="#000" stroke-width="1.15" stroke-linejoin="miter" stroke-miterlimit="6"/></g><g transform="translate(281.70000000000005,30.599999999999994) scale(0.86)" fill="#e2692a"><rect x="2.6" y="0" width="2.2" height="6" rx="1"/><rect x="10.8" y="0" width="2.2" height="6" rx="1"/><path d="M0,6.9 H15.8 V8.9 C15.2,12.4 13.3,15.6 11.2,17.2 H4.6 C2.5,15.6 0.6,12.4 0,8.9 Z"/><rect x="6.5" y="16" width="2.8" height="5.3"/><circle cx="17.8" cy="15.45" r="7.4" fill="#20201c"/><circle cx="17.8" cy="15.45" r="6.2" fill="#e2692a"/><path d="M15.9,13.549999999999999 L19.7,17.349999999999998 M19.7,13.549999999999999 L15.9,17.349999999999998" stroke="#000" stroke-width="1.25"/></g><polygon points="341.68,32.80 342.12,30.20 346.08,30.20 346.52,32.80 349.13,34.30 351.60,33.39 353.58,36.81 351.55,38.50 351.55,41.50 353.58,43.19 351.60,46.61 349.13,45.70 346.52,47.20 346.08,49.80 342.12,49.80 341.68,47.20 339.07,45.70 336.60,46.61 334.62,43.19 336.65,41.50 336.65,38.50 334.62,36.81 336.60,33.39 339.07,34.30" fill="#aca8a4" stroke="#aca8a4" stroke-width="1.2" stroke-linejoin="round"/><circle cx="344.0999999999999" cy="40" r="2.9" fill="#20201c"/></svg>
  <div class="row" style="top:80px;background:#000"></div>
  <div class="row" style="top:148px;background:#14110e"></div>
  <div class="row" style="top:216px;background:#000"></div>
  <div class="row" style="top:284px;background:#14110e"></div>
  <div class="row" style="top:352px;background:#000"></div>
  <div class="row" style="top:420px;background:#14110e"></div>
  <div class="abs" style="left:376px;top:80px;width:8px;height:336px;border-radius:4px;background:#574729"></div>
  <svg class="abs" style="left:0;top:0" width="384" height="480" viewBox="0 0 384 480"><path transform="translate(22,103.69999999999999) scale(0.634,0.636)" d="M16,27.5 L3.2,14.6 C-0.6,10.8 -0.6,4.9 3.1,1.9 C6.6,-0.9 12.1,-0.4 16,4.1 C19.9,-0.4 25.4,-0.9 28.9,1.9 C32.6,4.9 32.6,10.8 28.8,14.6 Z" fill="#72d98c"/><circle cx="32" cy="180" r="8.6" fill="none" stroke="#3b4650" stroke-width="1"/><path transform="translate(22,239.7) scale(0.634,0.636)" d="M16,27.5 L3.2,14.6 C-0.6,10.8 -0.6,4.9 3.1,1.9 C6.6,-0.9 12.1,-0.4 16,4.1 C19.9,-0.4 25.4,-0.9 28.9,1.9 C32.6,4.9 32.6,10.8 28.8,14.6 Z" fill="#72d98c"/><path transform="translate(22,307.5) scale(0.634,0.636)" d="M16,27.5 L3.2,14.6 C-0.6,10.8 -0.6,4.9 3.1,1.9 C6.6,-0.9 12.1,-0.4 16,4.1 C19.9,-0.4 25.4,-0.9 28.9,1.9 C32.6,4.9 32.6,10.8 28.8,14.6 Z" fill="#aaa6a2"/><path transform="translate(22,307.5) scale(0.634,0.636)" d="M17.2,-0.5 L18.6,3.2 L15.6,7 L11,10.8 L17.4,16.8" fill="none" stroke="#14110e" stroke-width="2.3" stroke-linejoin="miter"/><path transform="translate(22,375.5) scale(0.634,0.636)" d="M16,27.5 L3.2,14.6 C-0.6,10.8 -0.6,4.9 3.1,1.9 C6.6,-0.9 12.1,-0.4 16,4.1 C19.9,-0.4 25.4,-0.9 28.9,1.9 C32.6,4.9 32.6,10.8 28.8,14.6 Z" fill="#aaa6a2"/><path transform="translate(22,375.5) scale(0.634,0.636)" d="M17.2,-0.5 L18.6,3.2 L15.6,7 L11,10.8 L17.4,16.8" fill="none" stroke="#000" stroke-width="2.3" stroke-linejoin="miter"/><path transform="translate(22,443.5) scale(0.634,0.636)" d="M16,27.5 L3.2,14.6 C-0.6,10.8 -0.6,4.9 3.1,1.9 C6.6,-0.9 12.1,-0.4 16,4.1 C19.9,-0.4 25.4,-0.9 28.9,1.9 C32.6,4.9 32.6,10.8 28.8,14.6 Z" fill="#aaa6a2"/><path transform="translate(22,443.5) scale(0.634,0.636)" d="M17.2,-0.5 L18.6,3.2 L15.6,7 L11,10.8 L17.4,16.8" fill="none" stroke="#14110e" stroke-width="2.3" stroke-linejoin="miter"/><g fill="#aaa6a2"><rect x="340.1000000000001" y="305.9" width="7.6" height="3" rx="1.5"/><rect x="334.9000000000001" y="307.09999999999997" width="18" height="2.9" rx="0.6"/><path d="M336.0000000000001,310.79999999999995 H352.2000000000001 V323.9 A2.3,2.3 0 0 1 349.9000000000001,326.2 H338.30000000000007 A2.3,2.3 0 0 1 336.0000000000001,323.9 Z"/><rect x="339.80000000000007" y="313.4" width="1.4" height="9.8" rx="0.7" fill="#14110e"/><rect x="343.30000000000007" y="313.4" width="1.5" height="9.8" rx="0.7" fill="#14110e"/><rect x="346.9000000000001" y="313.4" width="1.4" height="9.8" rx="0.7" fill="#14110e"/></g><g fill="#aaa6a2"><rect x="340.1000000000001" y="373.9" width="7.6" height="3" rx="1.5"/><rect x="334.9000000000001" y="375.09999999999997" width="18" height="2.9" rx="0.6"/><path d="M336.0000000000001,378.79999999999995 H352.2000000000001 V391.9 A2.3,2.3 0 0 1 349.9000000000001,394.2 H338.30000000000007 A2.3,2.3 0 0 1 336.0000000000001,391.9 Z"/><rect x="339.80000000000007" y="381.4" width="1.4" height="9.8" rx="0.7" fill="#000"/><rect x="343.30000000000007" y="381.4" width="1.5" height="9.8" rx="0.7" fill="#000"/><rect x="346.9000000000001" y="381.4" width="1.4" height="9.8" rx="0.7" fill="#000"/></g><g fill="#aaa6a2"><rect x="340.1000000000001" y="441.9" width="7.6" height="3" rx="1.5"/><rect x="334.9000000000001" y="443.09999999999997" width="18" height="2.9" rx="0.6"/><path d="M336.0000000000001,446.79999999999995 H352.2000000000001 V459.9 A2.3,2.3 0 0 1 349.9000000000001,462.2 H338.30000000000007 A2.3,2.3 0 0 1 336.0000000000001,459.9 Z"/><rect x="339.80000000000007" y="449.4" width="1.4" height="9.8" rx="0.7" fill="#14110e"/><rect x="343.30000000000007" y="449.4" width="1.5" height="9.8" rx="0.7" fill="#14110e"/><rect x="346.9000000000001" y="449.4" width="1.4" height="9.8" rx="0.7" fill="#14110e"/></g></svg>
  <div class="t" style="left:16.10px;top:33px;font-size:15.5px;font-weight:normal;color:#b2aeaa;transform:scaleX(0.9855);">Your Paired Devices</div>
<div class="t" style="left:63.61px;top:93px;font-size:15px;font-weight:bold;color:#72d98c;transform:scaleX(1.0993);">reptar</div>
<div class="t" style="left:64.11px;top:111px;font-size:12px;font-weight:normal;color:#b7b3ae;transform:scaleX(0.9754);-webkit-text-stroke:0.35px #b7b3ae;">Synergy - 84:F7:03:D2:93:3A</div>
<div class="t" style="left:64.60px;top:127px;font-size:12px;font-weight:normal;color:#b7b3ae;transform:scaleX(1.0072);-webkit-text-stroke:0.35px #b7b3ae;">v1.0.8 - (synergy) build #648</div>
<div class="t" style="left:63.61px;top:229px;font-size:15px;font-weight:bold;color:#72d98c;transform:scaleX(1.1040);">ugh</div>
<div class="t" style="left:64.12px;top:247px;font-size:12px;font-weight:normal;color:#b7b3ae;transform:scaleX(0.9601);-webkit-text-stroke:0.35px #b7b3ae;">Synergy - 84:F7:03:D4:3E:C0</div>
<div class="t" style="left:64.60px;top:263px;font-size:12px;font-weight:normal;color:#b7b3ae;transform:scaleX(1.0079);-webkit-text-stroke:0.35px #b7b3ae;">v1.0.8 - (synergy) build #648</div>
<div class="t" style="left:63.97px;top:297px;font-size:15px;font-weight:bold;color:#c9c5c0;transform:scaleX(1.0445);">Coke Zero</div>
<div class="t" style="left:64.11px;top:315px;font-size:12px;font-weight:normal;color:#b7b3ae;transform:scaleX(0.9722);-webkit-text-stroke:0.35px #b7b3ae;">Synergy - 84:F7:03:D2:93:3C</div>
<div class="t" style="left:63.69px;top:331px;font-size:12px;font-weight:normal;color:#b7b3ae;transform:scaleX(1.0100);-webkit-text-stroke:0.35px #b7b3ae;">Last Connected 22h</div>
<div class="t" style="left:64.17px;top:365px;font-size:15px;font-weight:bold;color:#c9c5c0;transform:scaleX(1.0707);">Zoo</div>
<div class="t" style="left:64.12px;top:383px;font-size:12px;font-weight:normal;color:#b7b3ae;transform:scaleX(0.9686);-webkit-text-stroke:0.35px #b7b3ae;">Synergy - 84:F7:03:D2:93:E2</div>
<div class="t" style="left:63.69px;top:399px;font-size:12px;font-weight:normal;color:#b7b3ae;transform:scaleX(1.0100);-webkit-text-stroke:0.35px #b7b3ae;">Last Connected 22h</div>
<div class="t" style="left:64.20px;top:433px;font-size:15px;font-weight:bold;color:#c9c5c0;">Six</div>
<div class="t" style="left:64.11px;top:451px;font-size:12px;font-weight:normal;color:#b7b3ae;transform:scaleX(0.9777);-webkit-text-stroke:0.35px #b7b3ae;">Synergy - 84:F7:03:D2:94:B2</div>
<div class="t" style="left:63.69px;top:467px;font-size:12px;font-weight:normal;color:#b7b3ae;transform:scaleX(1.0100);-webkit-text-stroke:0.35px #b7b3ae;">Last Connected 22h</div>
  <div class="abs" style="left:64.2px;top:166.4px;width:1.8px;height:7.4px;background:#5fc98a"></div><div class="abs" style="left:64.2px;top:186px;width:1.6px;height:3px;background:#8a8580"></div><div class="abs" style="left:64.2px;top:199px;width:1.8px;height:6px;background:#7090b0"></div>
  <div class="abs" style="left:66px;top:146px;width:183px;height:69px;border-radius:6px 6px 0 0;background:#120f0c"></div>
  <div class="t" style="left:81.32px;top:167px;font-size:15.5px;font-weight:bold;color:#d3cfca;transform:scaleX(0.9810);">Rayce sad</div>
<div class="t" style="left:81.82px;top:184px;font-size:12px;font-weight:normal;color:#b7b3ae;transform:scaleX(0.9600);-webkit-text-stroke:0.35px #b7b3ae;">Synergy - 84:F7:03:D2:51:9C</div>
</div>
</body></html>
